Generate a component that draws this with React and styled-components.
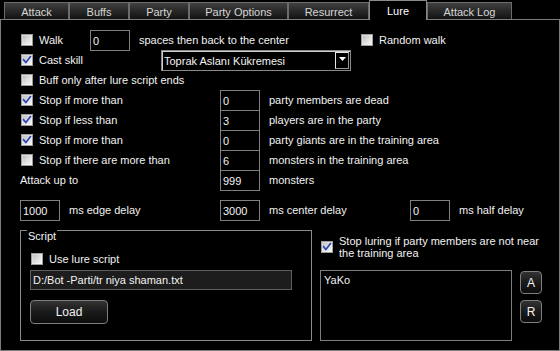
import React from "react";
import styled, { createGlobalStyle } from "styled-components";

const Global = createGlobalStyle`
  html, body { margin: 0; padding: 0; background: #000; }
  body {
    font-family: "Liberation Sans", Arial, sans-serif;
    font-size: 11px;
    color: #f2f2f2;
    width: 560px;
    height: 351px;
    overflow: hidden;
  }
  * { box-sizing: border-box; }
`;

const Window = styled.div`
  width: 560px;
  height: 351px;
  display: flex;
  flex-direction: column;
  background: #000;
`;

const TabBar = styled.div`
  display: flex;
  align-items: flex-end;
  height: 19px;
  padding-left: 4px;
  flex-shrink: 0;
`;

const Tab = styled.div`
  width: ${(p) => p.$w}px;
  height: ${(p) => (p.$active ? 20 : 17)}px;
  margin-bottom: ${(p) => (p.$active ? -1 : 0)}px;
  position: relative;
  z-index: ${(p) => (p.$active ? 2 : 1)};
  border: 1px solid ${(p) => (p.$active ? "#8a8a8a" : "#6c6c6c")};
  border-bottom: none;
  background: ${(p) =>
    p.$active ? "#000" : "linear-gradient(#404040, #262626 55%, #121212)"};
  color: ${(p) => (p.$active ? "#ffffff" : "#d6d6d6")};
  display: flex;
  align-items: center;
  justify-content: center;
  padding-top: ${(p) => (p.$active ? 0 : 1)}px;
`;

const Panel = styled.div`
  flex: 1;
  border: 1px solid #7c7c7c;
  padding: 10px 0 0 19px;
  display: flex;
  flex-direction: column;
`;

const Row = styled.div`
  display: flex;
  align-items: center;
  height: 20px;
  margin-top: ${(p) => p.$mt || 0}px;
`;

const Cell = styled.div`
  width: ${(p) => (p.$w ? `${p.$w}px` : "auto")};
  flex-shrink: 0;
  display: flex;
  align-items: center;
  gap: 6px;
  padding-left: ${(p) => p.$pl || 0}px;
  white-space: nowrap;
`;

const Box = styled.span`
  width: 12px;
  height: 12px;
  margin-left: 1px;
  flex-shrink: 0;
  border: 1px solid #9c9c9c;
  background: linear-gradient(135deg, #b9b9b9, #e4e4e4 60%, #f7f7f7);
  box-shadow: inset 0 0 0 1px rgba(255, 255, 255, 0.35);
  display: flex;
  align-items: center;
  justify-content: center;
`;

const Check = ({ checked }) => (
  <Box>
    {checked && (
      <svg width="10" height="10" viewBox="0 0 10 10">
        <path
          d="M1.6 4.8 L3.9 7.4 L8.4 1.6"
          fill="none"
          stroke="#2b43b5"
          strokeWidth="1.7"
          strokeLinecap="square"
        />
      </svg>
    )}
  </Box>
);

const NumBox = styled.input`
  width: ${(p) => p.$w || 40}px;
  height: 21px;
  align-self: flex-start;
  flex-shrink: 0;
  border: 1px solid #7f7f7f;
  background: #000;
  color: #f2f2f2;
  font: inherit;
  padding: 0 2px;
  margin: 0;
  outline: none;
`;

const Combo = styled.div`
  width: 190px;
  height: 21px;
  align-self: flex-start;
  flex-shrink: 0;
  border: 1px solid #8a8a8a;
  box-shadow: inset 1px 1px 0 #cfcfcf;
  display: flex;
  align-items: center;
  padding: 0 1px 0 2px;
  justify-content: space-between;
`;

const ComboButton = styled.span`
  width: 14px;
  height: 17px;
  border: 1px solid #e6e6e6;
  border-right-color: #9a9a9a;
  border-bottom-color: #9a9a9a;
  background: #000;
  display: flex;
  justify-content: center;
  padding-top: 4px;
`;

const Bottom = styled.div`
  display: flex;
  margin-top: 10px;
  gap: 8px;
  height: 111px;
`;

const Group = styled.div`
  position: relative;
  width: 292px;
  height: 111px;
  border: 1px solid #8a8a8a;
  padding: 18px 0 0 9px;
  display: flex;
  flex-direction: column;
`;

const GroupTitle = styled.span`
  position: absolute;
  top: -1px;
  left: 6px;
  padding: 0 1px;
  line-height: 13px;
  background: #000;
`;

const PathField = styled.div`
  width: 262px;
  height: 20px;
  margin-top: 1px;
  border: 1px solid #5e5e5e;
  background: #1d1d1d;
  padding: 0 2px;
  display: flex;
  align-items: center;
`;

const Button = styled.button`
  width: ${(p) => p.$w}px;
  height: ${(p) => p.$h}px;
  margin-top: ${(p) => p.$mt || 0}px;
  border: 1px solid #7e7e7e;
  border-radius: 4px;
  background: linear-gradient(#333333, #1a1a1a 50%, #0c0c0c);
  color: #f2f2f2;
  font: inherit;
  font-size: ${(p) => p.$fs || 11}px;
  padding: 0;
  display: flex;
  align-items: center;
  justify-content: center;
`;

const RightCol = styled.div`
  width: 239px;
  display: flex;
  flex-direction: column;
`;

const StopRow = styled.div`
  display: flex;
  align-items: center;
  gap: 6px;
  margin-top: 5px;
`;

const TwoLine = styled.div`
  line-height: 12px;
`;

const ListRow = styled.div`
  display: flex;
  margin-top: 11px;
  gap: 8px;
`;

const ListBox = styled.div`
  width: 192px;
  height: 71px;
  border: 1px solid #7e7e7e;
  padding: 3px 3px;
  line-height: 13px;
`;

const ButtonCol = styled.div`
  display: flex;
  flex-direction: column;
`;

const tabs = [
  ["Attack", 65],
  ["Buffs", 60],
  ["Party", 60],
  ["Party Options", 99],
  ["Resurrect", 81],
  ["Lure", 58],
  ["Attack Log", 85],
];

const stopRows = [
  [true, "Stop if more than", "0", "party members are dead"],
  [true, "Stop if less than", "3", "players are in the party"],
  [true, "Stop if more than", "0", "party giants are in the training area"],
  [false, "Stop if there are more than", "6", "monsters in the training area"],
];

export default function App() {
  return (
    <>
      <Global />
      <Window>
        <TabBar>
          {tabs.map(([t, w]) => (
            <Tab key={t} $w={w} $active={t === "Lure"}>
              {t}
            </Tab>
          ))}
        </TabBar>
        <Panel>
          <Row>
            <Cell $w={70}>
              <Check />
              Walk
            </Cell>
            <NumBox readOnly value="0" />
            <Cell $w={230} $pl={9}>
              spaces then back to the center
            </Cell>
            <Cell>
              <Check />
              Random walk
            </Cell>
          </Row>
          <Row>
            <Cell $w={141}>
              <Check checked />
              Cast skill
            </Cell>
            <Combo>
              <span>Toprak Aslanı Kükremesi</span>
              <ComboButton>
                <svg width="7" height="4" viewBox="0 0 7 4">
                  <path d="M0 0 H7 L3.5 4 Z" fill="#fff" />
                </svg>
              </ComboButton>
            </Combo>
          </Row>
          <Row>
            <Cell>
              <Check />
              Buff only after lure script ends
            </Cell>
          </Row>
          {stopRows.map(([c, l, v, t], i) => (
            <Row key={i}>
              <Cell $w={200}>
                <Check checked={c} />
                {l}
              </Cell>
              <NumBox readOnly value={v} />
              <Cell $pl={9}>{t}</Cell>
            </Row>
          ))}
          <Row>
            <Cell $w={200}>Attack up to</Cell>
            <NumBox readOnly value="999" />
            <Cell $pl={9}>monsters</Cell>
          </Row>
          <Row $mt={10}>
            <NumBox readOnly value="1000" />
            <Cell $w={160} $pl={9}>
              ms edge delay
            </Cell>
            <NumBox readOnly value="3000" />
            <Cell $w={150} $pl={9}>
              ms center delay
            </Cell>
            <NumBox readOnly value="0" />
            <Cell $pl={9}>ms half delay</Cell>
          </Row>
          <Bottom>
            <Group>
              <GroupTitle>Script</GroupTitle>
              <Row>
                <Cell>
                  <Check />
                  Use lure script
                </Cell>
              </Row>
              <PathField>D:/Bot -Parti/tr niya shaman.txt</PathField>
              <Button $w={78} $h={24} $mt={10} $fs={12}>
                Load
              </Button>
            </Group>
            <RightCol>
              <StopRow>
                <Check checked />
                <TwoLine>
                  Stop luring if party members are not near
                  <br />
                  the training area
                </TwoLine>
              </StopRow>
              <ListRow>
                <ListBox>YaKo</ListBox>
                <ButtonCol>
                  <Button $w={22} $h={23} $mt={1} $fs={12}>
                    A
                  </Button>
                  <Button $w={22} $h={23} $mt={6} $fs={12}>
                    R
                  </Button>
                </ButtonCol>
              </ListRow>
            </RightCol>
          </Bottom>
        </Panel>
      </Window>
    </>
  );
}
